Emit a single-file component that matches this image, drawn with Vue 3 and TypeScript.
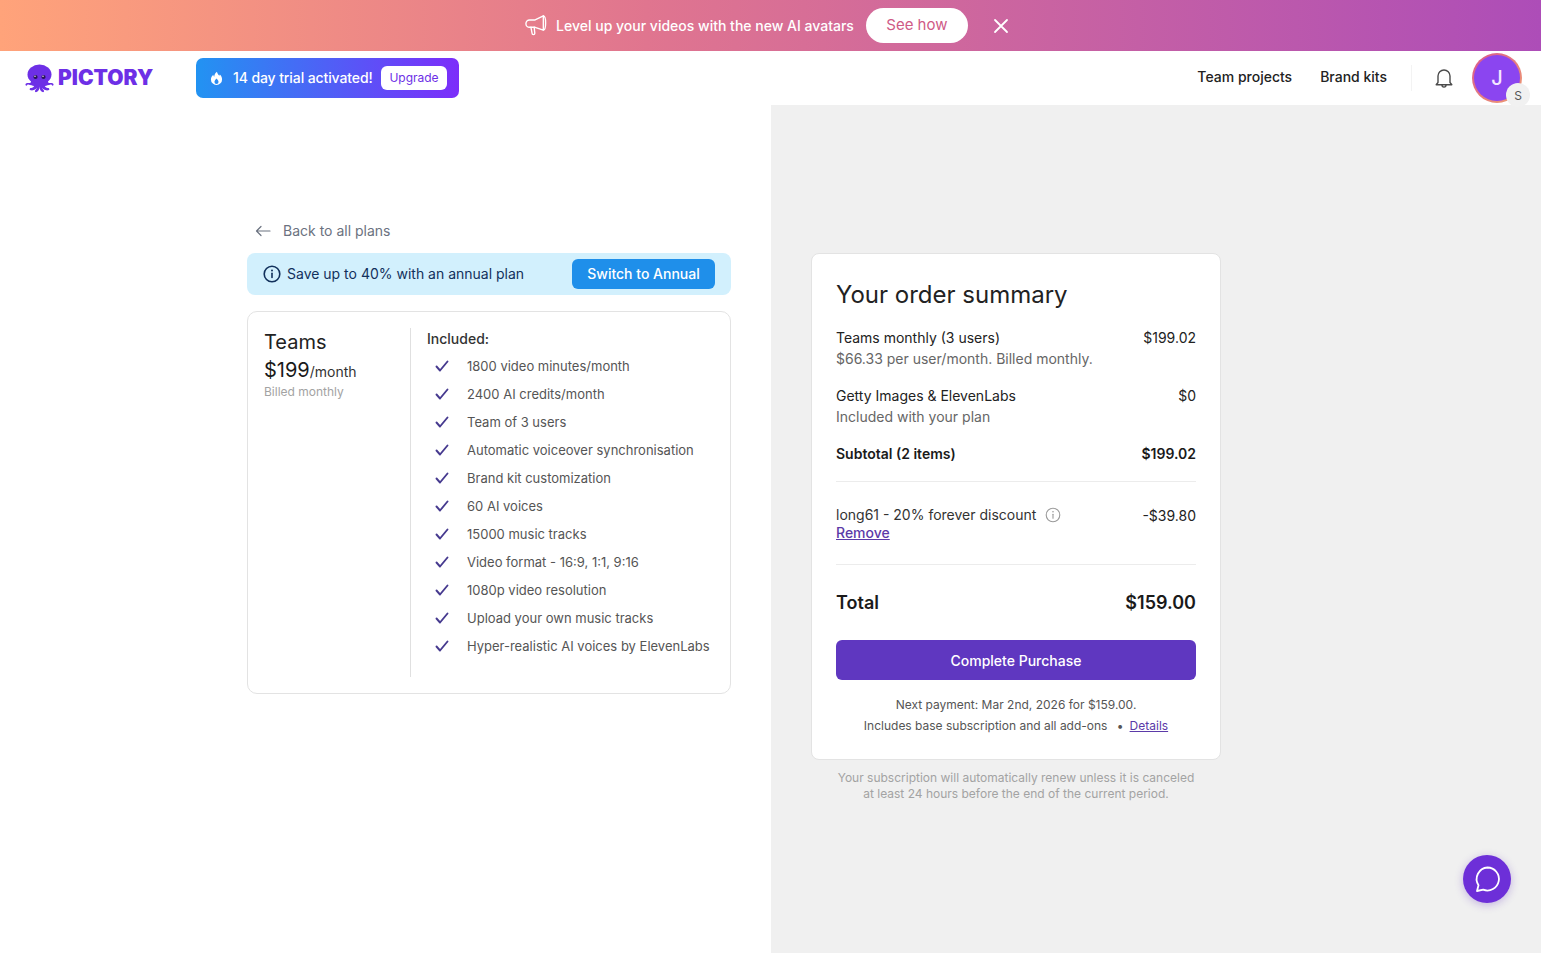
<script setup lang="ts">
const features: string[] = [
  '1800 video minutes/month',
  '2400 AI credits/month',
  'Team of 3 users',
  'Automatic voiceover synchronisation',
  'Brand kit customization',
  '60 AI voices',
  '15000 music tracks',
  'Video format - 16:9, 1:1, 9:16',
  '1080p video resolution',
  'Upload your own music tracks',
  'Hyper-realistic AI voices by ElevenLabs',
]
</script>

<template>
  <div class="page">
    <div class="promo">
      <svg class="promo-icon" viewBox="0 0 24 24" width="22" height="22" fill="none" stroke="currentColor" stroke-width="1.5" stroke-linecap="round" stroke-linejoin="round">
        <path d="M20 2v15.500L11 14.500H5a3.800 3.800 0 0 1 0-8h6z" />
        <path d="M20 2c1.500 0 2.500 3.500 2.500 7.700s-1 7.800-2.500 7.800" />
        <path d="M6.500 14.500l1.200 6.500a1.500 1.500 0 0 0 3 0l-.7-6.500" />
      </svg>
      <span class="promo-text">Level up your videos with the new AI avatars</span>
      <button class="promo-btn">See how</button>
      <svg class="promo-close" viewBox="0 0 16 16" width="16" height="16" fill="none" stroke="currentColor" stroke-width="1.800" stroke-linecap="round">
        <path d="M2 2l12 12M14 2L2 14" />
      </svg>
    </div>

    <header class="topbar">
      <div class="logo">
        <svg viewBox="0 0 29 29" width="29" height="29" fill="#6d2fe6">
          <ellipse cx="14.500" cy="10.500" rx="12" ry="10" />
          <rect x="6" y="13" width="17" height="9" rx="3" />
          <path d="M7 16c-.6 2.600-2 3.400-3.500 3-1.500-.4-2.800.3-3 1.300-.3 1.500 1.200 2 1.700.8.4-.6 1-.6 1.800-.3 2.500.8 5 .3 6.500-2z" />
          <path d="M22 16c.6 2.600 2 3.400 3.500 3 1.500-.4 2.800.3 3 1.300.3 1.500-1.200 2-1.700.8-.4-.6-1-.6-1.800-.3-2.500.8-5 .3-6.500-2z" />
          <path d="M10 20c-.5 2.800-2.300 4-4 4-1.500 0-2 2-.3 2.300 3 .5 6.300-1 7.300-4.800z" />
          <path d="M19 20c.5 2.800 2.300 4 4 4 1.500 0 2 2 .3 2.300-3 .5-6.300-1-7.300-4.800z" />
          <path d="M12 21c0 2.800-.6 4.300-1.700 5.300-.9.900-.1 2.200 1.200 1.800 2-.6 3-3 3-5.600 0 2.600 1 5 3 5.600 1.300.4 2.100-.9 1.200-1.800C17.600 25.300 17 23.800 17 21z" />
          <circle cx="10.500" cy="13" r="2.100" fill="#2a1458" />
          <circle cx="18.500" cy="13" r="2.100" fill="#2a1458" />
          <circle cx="10" cy="12.300" r=".7" fill="#fff" />
          <circle cx="18" cy="12.300" r=".7" fill="#fff" />
        </svg>
        <span class="logo-text">PICTORY</span>
      </div>

      <div class="trial">
        <svg viewBox="0 0 14 16" width="13" height="15" fill="#fff">
          <path fill-rule="evenodd" d="M7.500.8c.4 2.200 1.500 3 2.600 4.300l.5-1.300C12.200 5.200 13 7 13 9a6 6 0 0 1-12 0c0-2.300 1.200-3.700 2.500-5 .2 1 .5 1.600 1.100 2.100C4.600 4 5.600 2 7.500.8zM7 8c-.9 1.100-2.200 2.300-2.200 3.800a2.200 2.200 0 0 0 4.400 0C9.200 10.300 7.900 9.100 7 8z" />
        </svg>
        <span class="trial-text">14 day trial activated!</span>
        <button class="trial-btn">Upgrade</button>
      </div>

      <nav class="nav">
        <a>Team projects</a>
        <a>Brand kits</a>
      </nav>
      <span class="nav-sep"></span>
      <svg class="bell" viewBox="0 0 24 24" width="24" height="24" fill="none" stroke="#4b4b4b" stroke-width="1.400" stroke-linecap="round" stroke-linejoin="round">
        <path d="M6 16.500V10a6 6 0 0 1 12 0v6.500l1.800 2.300H4.200z" />
        <path d="M10 19c0 2.800 4 2.800 4 0" />
      </svg>
      <div class="avatar">
        <div class="avatar-inner">J</div>
        <span class="avatar-badge">S</span>
      </div>
    </header>

    <main class="main">
      <section class="left">
        <div class="left-inner">
          <div class="back">
            <svg viewBox="0 0 16 12" width="16" height="12" fill="none" stroke="#6b7280" stroke-width="1.200" stroke-linecap="round" stroke-linejoin="round">
              <path d="M15 6H1.500M6 1.500L1.500 6 6 10.500" />
            </svg>
            <span class="back-text">Back to all plans</span>
          </div>

          <div class="annual">
            <svg viewBox="0 0 18 18" width="18" height="18" fill="none" stroke="#12315c" stroke-width="1.600" stroke-linecap="round">
              <circle cx="9" cy="9" r="7.800" />
              <path d="M9 8.200v4.300" />
              <path d="M9 5.400v.1" stroke-width="2" />
            </svg>
            <span class="annual-text">Save up to 40% with an annual plan</span>
            <button class="annual-btn">Switch to Annual</button>
          </div>

          <div class="plan">
            <div class="plan-side">
              <div class="plan-name">Teams</div>
              <div class="plan-price">$199<small>/month</small></div>
              <div class="plan-billed">Billed monthly</div>
            </div>
            <div class="plan-features">
              <div class="included">Included:</div>
              <ul>
                <li v-for="feature in features" :key="feature">
                  <svg viewBox="0 0 14 12" width="14" height="12" fill="none" stroke="#463a8f" stroke-width="1.900" stroke-linecap="round" stroke-linejoin="round">
                    <path d="M1.500 6.500l3.500 4L12.500 1.500" />
                  </svg>
                  <span>{{ feature }}</span>
                </li>
              </ul>
            </div>
          </div>
        </div>
      </section>

      <section class="right">
        <div class="right-inner">
          <div class="summary">
            <h2>Your order summary</h2>

            <div class="line">
              <div>
                <div class="line-title">Teams monthly (3 users)</div>
                <div class="line-sub">$66.33 per user/month. Billed monthly.</div>
              </div>
              <div class="line-title">$199.02</div>
            </div>

            <div class="line">
              <div>
                <div class="line-title">Getty Images &amp; ElevenLabs</div>
                <div class="line-sub">Included with your plan</div>
              </div>
              <div class="line-title">$0</div>
            </div>

            <div class="subtotal">
              <span>Subtotal (2 items)</span>
              <span>$199.02</span>
            </div>

            <div class="discount">
              <div>
                <div class="discount-name">
                  long61 - 20% forever discount
                  <svg viewBox="0 0 16 16" width="16" height="16" fill="none" stroke="#9a9a9a" stroke-width="1.100" stroke-linecap="round">
                    <circle cx="8" cy="8" r="6.800" />
                    <path d="M8 7.200v4" />
                    <path d="M8 4.700v.1" stroke-width="1.600" />
                  </svg>
                </div>
                <a class="remove">Remove</a>
              </div>
              <div class="line-title discount-amount">-$39.80</div>
            </div>

            <div class="total">
              <span>Total</span>
              <span>$159.00</span>
            </div>

            <button class="purchase">Complete Purchase</button>

            <div class="next">Next payment: Mar 2nd, 2026 for $159.00.</div>
            <div class="includes">
              Includes base subscription and all add-ons
              <span class="dot">•</span>
              <a>Details</a>
            </div>
          </div>
          <p class="renew">Your subscription will automatically renew unless it is canceled at least 24 hours before the end of the current period.</p>
        </div>
      </section>
    </main>

    <button class="chat">
      <svg viewBox="0 0 30 30" width="30" height="30" fill="none" stroke="#fff" stroke-width="1.800" stroke-linejoin="round">
        <path d="M15.500 3.500a11.500 11.500 0 1 1-4.300 22.200l-6.200 1.300 1.500-5.800A11.500 11.500 0 0 1 15.500 3.500z" />
      </svg>
    </button>
  </div>
</template>

<style>
html,
body {
  margin: 0;
  background: #fff;
}
</style>

<style scoped>
.page {
  position: relative;
  width: 1541px;
  height: 953px;
  overflow: hidden;
  font-family: Inter, "Liberation Sans", sans-serif;
  color: #1a1a1a;
  background: #fff;
}
button {
  font-family: inherit;
  border: none;
  cursor: pointer;
}

.promo {
  height: 51px;
  display: flex;
  align-items: center;
  justify-content: center;
  padding-right: 7px;
  box-sizing: border-box;
  color: #fff;
  background: linear-gradient(90deg, #ffa37a 0%, #e0758f 42%, #ad4db8 100%);
}
.promo-icon {
  margin-right: 9px;
  margin-top: -2px;
}
.promo-text {
  font-size: 14px;
  font-weight: 500;
  margin-right: 12px;
}
.promo-btn {
  width: 102px;
  height: 35px;
  border-radius: 18px;
  background: #fff;
  color: #cf5a86;
  font-size: 15px;
  margin-right: 25px;
  padding: 0 0 2px;
}

.topbar {
  height: 54px;
  display: flex;
  align-items: center;
  padding: 0 19px 0 25px;
  background: #fff;
}
.logo {
  display: flex;
  align-items: center;
  gap: 4px;
  width: 171px;
}
.logo-text {
  font-weight: 900;
  font-size: 21px;
  color: #6d2fe6;
  padding-bottom: 2px;
}
.trial {
  width: 263px;
  height: 40px;
  box-sizing: border-box;
  display: flex;
  align-items: center;
  padding: 0 12px 0 14px;
  border-radius: 7px;
  color: #fff;
  background: linear-gradient(90deg, #2293f2 0%, #7c2dfa 100%);
}
.trial-text {
  font-size: 14px;
  font-weight: 500;
  letter-spacing: -0.1px;
  margin-left: 10px;
  padding-bottom: 1px;
}
.trial-btn {
  margin-left: auto;
  width: 66px;
  height: 24px;
  border-radius: 6px;
  background: #fff;
  color: #6d2fe6;
  font-size: 12px;
  padding: 0 0 2px;
}
.nav {
  margin-left: auto;
  margin-right: 1px;
  display: flex;
  gap: 28px;
  font-size: 14px;
  font-weight: 500;
  color: #222;
  padding-bottom: 3px;
}
.nav-sep {
  width: 1px;
  height: 26px;
  margin: 0 20px 0 23px;
  background: #f3f3f3;
}
.bell {
  margin-right: 16px;
}
.avatar {
  position: relative;
  width: 50px;
  height: 50px;
  border-radius: 50%;
  padding: 2px;
  box-sizing: border-box;
  background: linear-gradient(135deg, #d9568f, #f0a070);
}
.avatar-inner {
  width: 100%;
  height: 100%;
  border-radius: 50%;
  display: flex;
  align-items: center;
  justify-content: center;
  background: #8b45f0;
  color: #f4e6ff;
  font-size: 20px;
  font-weight: 500;
}
.avatar-badge {
  position: absolute;
  right: -8px;
  bottom: -4px;
  width: 24px;
  height: 24px;
  border-radius: 50%;
  background: #f1f1f1;
  color: #555;
  font-size: 12px;
  display: flex;
  align-items: center;
  justify-content: center;
}

.main {
  display: grid;
  grid-template-columns: 771px 770px;
  height: 848px;
}
.left {
  display: flex;
  justify-content: flex-end;
  padding: 116px 40px 0 0;
}
.left-inner {
  width: 484px;
}
.back {
  display: flex;
  align-items: center;
  gap: 12px;
  height: 20px;
  padding-left: 8px;
  font-size: 14px;
  color: #6b7280;
  margin-bottom: 12px;
}
.back-text {
  padding-bottom: 2px;
}
.annual {
  height: 42px;
  display: flex;
  align-items: center;
  padding: 0 16px;
  border-radius: 8px;
  background: #d2f0fd;
  color: #12315c;
}
.annual-text {
  margin-left: 6px;
  font-size: 14px;
  padding-bottom: 2px;
}
.annual-btn {
  margin-left: auto;
  width: 143px;
  height: 30px;
  border-radius: 6px;
  background: #1f8fea;
  color: #fff;
  font-size: 14px;
  font-weight: 500;
  padding: 0 0 2px;
}
.plan {
  margin-top: 16px;
  height: 383px;
  box-sizing: border-box;
  display: flex;
  padding: 16px;
  border: 1px solid #e3e3e3;
  border-radius: 10px;
}
.plan-side {
  width: 146px;
  flex: none;
  border-right: 1px solid #e0e0e0;
}
.plan-name {
  font-size: 20px;
  line-height: 28px;
  color: #222;
}
.plan-price {
  font-size: 20px;
  line-height: 28px;
}
.plan-price small {
  font-size: 14px;
  color: #333;
}
.plan-billed {
  font-size: 12px;
  line-height: 15px;
  margin-top: -2px;
  color: #a3a3a3;
}
.plan-features {
  padding-left: 16px;
  flex: 1;
}
.included {
  font-size: 14px;
  font-weight: 500;
  color: #333;
  line-height: 22px;
  margin-bottom: 2px;
}
.plan-features ul {
  list-style: none;
  margin: 0;
  padding: 0;
}
.plan-features li {
  height: 28px;
  display: flex;
  align-items: center;
  gap: 18px;
  padding-left: 8px;
  font-size: 13px;
  color: #555;
}

.right {
  background: #f0f0f0;
  padding: 148px 0 0 40px;
}
.right-inner {
  width: 410px;
}
.summary {
  height: 507px;
  box-sizing: border-box;
  padding: 25px 24px 0;
  background: #fff;
  border: 1px solid #e3e3e3;
  border-radius: 8px;
}
h2 {
  margin: 0 0 16px;
  font-size: 24px;
  font-weight: 400;
  line-height: 32px;
  color: #222;
}
.line {
  display: flex;
  justify-content: space-between;
  margin-bottom: 16px;
}
.line-title {
  font-size: 14px;
  line-height: 21px;
  color: #222;
}
.line-sub {
  font-size: 14px;
  line-height: 21px;
  color: #666;
}
.subtotal {
  display: flex;
  justify-content: space-between;
  font-size: 14px;
  font-weight: 600;
  line-height: 21px;
  padding-bottom: 17px;
  border-bottom: 1px solid #ececec;
}
.discount {
  display: flex;
  justify-content: space-between;
  padding: 22px 0 24px;
  border-bottom: 1px solid #ececec;
}
.discount-name {
  display: flex;
  align-items: center;
  gap: 9px;
  font-size: 14px;
  line-height: 21px;
  color: #333;
}
.discount-amount {
  padding-top: 1px;
}
.remove {
  display: block;
  font-size: 14px;
  line-height: 15px;
  font-weight: 500;
  color: #5b3aa8;
  text-decoration: underline;
}
.total {
  display: flex;
  justify-content: space-between;
  align-items: center;
  height: 75px;
  font-size: 18px;
  font-weight: 600;
  color: #1a1a1a;
}
.purchase {
  display: block;
  width: 100%;
  height: 40px;
  border-radius: 6px;
  background: #5f37c0;
  color: #fff;
  font-size: 14px;
  font-weight: 500;
}
.next,
.includes {
  text-align: center;
  font-size: 12px;
  line-height: 18px;
  color: #555;
}
.next {
  margin-top: 16px;
}
.includes {
  margin-top: 3px;
}
.dot {
  margin: 0 6px;
}
.includes a {
  color: #5b3aa8;
  text-decoration: underline;
}
.renew {
  margin: 10px 0 0;
  padding: 0 24px;
  text-align: center;
  font-size: 12px;
  line-height: 16px;
  color: #a3a3a3;
}

.chat {
  position: absolute;
  left: 1463px;
  top: 855px;
  width: 48px;
  height: 48px;
  border-radius: 50%;
  display: flex;
  align-items: center;
  justify-content: center;
  padding: 0;
  background: #6d2fd8;
  box-shadow: 0 2px 8px rgba(90, 40, 190, 0.3);
}
</style>
